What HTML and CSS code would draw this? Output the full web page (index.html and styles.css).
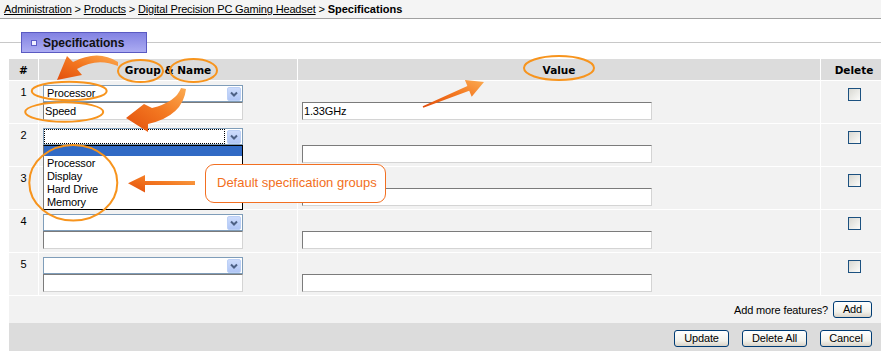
FILE: index.html
```html
<!DOCTYPE html>
<html lang="en">
<head>
  <meta charset="UTF-8" />
  <title>Specifications</title>
  <link rel="stylesheet" href="styles.css">
</head>
<body>
  <div class="crumbs">
    <a href="#">Administration</a> &gt; <a href="#">Products</a> &gt; <a href="#">Digital Precision PC Gaming Headset</a> &gt; <b>Specifications</b>
  </div>

  <div class="tabbar">
    <div class="tab"><span class="tab-icon"></span>Specifications</div>
  </div>

  <table class="specs">
    <thead>
      <tr>
        <th class="col-num">#</th>
        <th class="col-name">Group &amp; Name</th>
        <th class="col-value">Value</th>
        <th class="col-del">Delete</th>
      </tr>
    </thead>
    <tbody>
      <tr>
        <td class="num">1</td>
        <td class="name">
          <div class="select">
            <span class="select-text">Processor</span>
            <span class="select-btn"><svg width="14" height="14" viewBox="0 0 14 14"><path d="M4 5.5 L7 8.5 L10 5.5" /></svg></span>
          </div>
          <input class="field" type="text" value="Speed">
        </td>
        <td class="value"><input class="field wide" type="text" value="1.33GHz"></td>
        <td class="del"><input class="check" type="checkbox"></td>
      </tr>
      <tr>
        <td class="num">2</td>
        <td class="name">
          <div class="combo">
            <div class="select">
              <span class="select-text focus"></span>
              <span class="select-btn"><svg width="14" height="14" viewBox="0 0 14 14"><path d="M4 5.5 L7 8.5 L10 5.5" /></svg></span>
            </div>
            <!-- open dropdown -->
            <div class="options">
              <div class="option picked"></div>
              <div class="option-list">
                <div class="option">Processor</div>
                <div class="option">Display</div>
                <div class="option">Hard Drive</div>
                <div class="option">Memory</div>
              </div>
            </div>
          </div>
          <input class="field" type="text">
        </td>
        <td class="value"><input class="field wide" type="text"></td>
        <td class="del"><input class="check" type="checkbox"></td>
      </tr>
      <tr>
        <td class="num">3</td>
        <td class="name">
          <div class="select">
            <span class="select-text"></span>
            <span class="select-btn"><svg width="14" height="14" viewBox="0 0 14 14"><path d="M4 5.5 L7 8.5 L10 5.5" /></svg></span>
          </div>
          <input class="field" type="text">
        </td>
        <td class="value"><input class="field wide" type="text"></td>
        <td class="del"><input class="check" type="checkbox"></td>
      </tr>
      <tr>
        <td class="num">4</td>
        <td class="name">
          <div class="select">
            <span class="select-text"></span>
            <span class="select-btn"><svg width="14" height="14" viewBox="0 0 14 14"><path d="M4 5.5 L7 8.5 L10 5.5" /></svg></span>
          </div>
          <input class="field" type="text">
        </td>
        <td class="value"><input class="field wide" type="text"></td>
        <td class="del"><input class="check" type="checkbox"></td>
      </tr>
      <tr>
        <td class="num">5</td>
        <td class="name">
          <div class="select">
            <span class="select-text"></span>
            <span class="select-btn"><svg width="14" height="14" viewBox="0 0 14 14"><path d="M4 5.5 L7 8.5 L10 5.5" /></svg></span>
          </div>
          <input class="field" type="text">
        </td>
        <td class="value"><input class="field wide" type="text"></td>
        <td class="del"><input class="check" type="checkbox"></td>
      </tr>
    </tbody>
  </table>

  <div class="more">
    <span>Add more features?</span>
    <button class="btn btn-add">Add</button>
  </div>

  <div class="actions">
    <button class="btn btn-update">Update</button>
    <button class="btn btn-delete">Delete All</button>
    <button class="btn btn-cancel">Cancel</button>
  </div>

  <!-- annotations drawn over the form -->
  <div class="callout">Default specification groups</div>

  <svg class="marks" width="881" height="351" viewBox="0 0 881 351">
    <defs>
      <linearGradient id="flame" x1="0" y1="1" x2="1" y2="0">
        <stop offset="0" stop-color="#e24e0c" />
        <stop offset="0.55" stop-color="#f47a22" />
        <stop offset="1" stop-color="#fbab52" />
      </linearGradient>
    </defs>
    <g fill="none" stroke="#f7941d" stroke-width="2">
      <ellipse cx="140.5" cy="71" rx="22.5" ry="11" />
      <ellipse cx="193.5" cy="70.5" rx="23.5" ry="11.5" />
      <ellipse cx="559" cy="68" rx="35" ry="12" />
      <ellipse cx="69.2" cy="91" rx="37.5" ry="9.3" />
      <ellipse cx="64.2" cy="112" rx="39" ry="9.7" />
      <ellipse cx="73.3" cy="182.8" rx="44" ry="37.8" />
    </g>
    <g fill="url(#flame)">
      <path d="M118 62 Q98 49 73 62 L67 56 L57 80 L82 75 L77 69 Q97 57 118 66 Z" />
      <path d="M181 88 Q176 102 152 108 L144 104 L126 118 L148 132 L148 124 Q183 116 186 89 Z" />
      <path d="M422.7 106.3 L467.4 86.1 L464.9 80.1 L484 82 L471.7 96.7 L469.2 90.7 L423.3 107.7 Z" />
      <path d="M195 181 L145 181 L145 175 L128 183.3 L145 192.5 L145 185 L195 185 Z" />
    </g>
  </svg>
</body>
</html>
```

FILE: styles.css
```css
/* Page base: Tahoma-like small text */
html {
  overflow: hidden;
}

body {
  position: relative;
  width: 881px;
  height: 351px;
  margin: 0;
  overflow: hidden;
  background: #fff;
  color: #000;
  font-family: "Liberation Sans", Arial, sans-serif;
  font-size: 11px;
  letter-spacing: -0.15px;
}

/* Breadcrumb */
.crumbs {
  height: 18px;
  line-height: 18px;
  padding-left: 4px;
  background: #f4f4f4;
  border-bottom: 1px solid #a0a0a0;
  white-space: nowrap;
}

.crumbs a {
  color: #000;
  text-decoration: underline;
}

.crumbs b {
  letter-spacing: 0;
}

/* Section tab */
.tabbar {
  height: 39px;
  box-sizing: border-box;
  padding: 13px 0 0 21px;
  background: linear-gradient(to bottom, transparent 23px, #c8c8c8 23px, #c8c8c8 24px, transparent 24px);
}

.tab {
  display: flex;
  align-items: center;
  width: 126px;
  height: 21px;
  box-sizing: border-box;
  border: 1px solid #5a5ac2;
  background: linear-gradient(#8282e2, #acacf2);
  color: #111;
  font-size: 12px;
  font-weight: bold;
  letter-spacing: 0;
}

.tab-icon {
  width: 6px;
  height: 6px;
  box-sizing: border-box;
  margin: 0 6px 0 9px;
  border: 1px solid #5c5cc8;
  background: #f0f0ff;
}

/* Specifications grid */
.specs {
  width: 880px;
  margin-left: 8px;
  table-layout: fixed;
  border-collapse: separate;
  border-spacing: 1px;
}

.specs th {
  height: 21px;
  padding: 0;
  background: #dcdcdc;
  font-family: "DejaVu Sans", Verdana, sans-serif;
  font-size: 10.5px;
  font-weight: bold;
  letter-spacing: 0;
  text-align: center;
}

.col-num { width: 29px; }
.col-name { width: 258px; }
.col-value { width: 522px; }
.col-del { width: 66px; }

.specs tbody tr {
  height: 42px;
}

.specs td {
  padding: 0;
  background: #f2f2f2;
}

.specs td.num {
  vertical-align: top;
  padding-top: 5px;
  line-height: 13px;
  text-align: center;
}

.specs td.name {
  vertical-align: top;
  padding: 4px 0 0 4px;
}

.specs td.value {
  vertical-align: bottom;
  padding: 0 0 3px 4px;
}

.specs td.del {
  vertical-align: top;
  padding-top: 7px;
  text-align: center;
}

/* XP style combo box */
.combo {
  position: relative;
}

.select {
  display: flex;
  align-items: center;
  width: 200px;
  height: 17px;
  box-sizing: border-box;
  border: 1px solid #7f9db9;
  background: #fff;
}

.select-text {
  flex: 1;
  padding-left: 3px;
  line-height: 15px;
  white-space: nowrap;
}

.select-text.focus {
  align-self: stretch;
  margin-right: 2px;
  padding-left: 0;
  border: 1px dotted #000;
}

.select-btn {
  width: 14px;
  height: 14px;
  margin-right: 1px;
  box-sizing: border-box;
  border: 1px solid #bcd0f6;
  border-radius: 2px;
  background: linear-gradient(#cddcfc, #b0c6f6);
}

.select-btn svg {
  display: block;
  margin: -1px;
}

.select-btn path {
  fill: none;
  stroke: #4d6185;
  stroke-width: 2;
}

.options {
  position: absolute;
  top: 100%;
  left: 0;
  z-index: 5;
  width: 200px;
  box-sizing: border-box;
  border: 1px solid #000;
  border-left-color: #777;
  background: #fff;
}

.option.picked {
  height: 10px;
  background: #316ac5;
}

.option-list {
  padding-top: 1px;
}

.option-list .option {
  padding-left: 3px;
  line-height: 13px;
}

/* Inputs */
.field {
  display: block;
  width: 200px;
  height: 18px;
  box-sizing: border-box;
  margin: 0;
  padding: 0 1px;
  border: 1px solid;
  border-color: #7b7b7b #d4d4d4 #d4d4d4 #7b7b7b;
  background: #fff;
  color: #000;
  font-family: "Liberation Sans", Arial, sans-serif;
  font-size: 11px;
  letter-spacing: -0.15px;
  outline: none;
}

.field.wide {
  width: 350px;
}

.check {
  -webkit-appearance: none;
  appearance: none;
  display: inline-block;
  width: 13px;
  height: 13px;
  margin: 0;
  vertical-align: top;
  border: 1px solid #1c5180;
  background: linear-gradient(135deg, #d8d8d2, #fcfcfa);
}

/* Bottom bars */
.more {
  display: flex;
  justify-content: flex-end;
  align-items: center;
  gap: 5px;
  width: 877px;
  height: 27px;
  box-sizing: border-box;
  margin-left: 9px;
  padding-right: 14px;
  background: #f2f2f2;
}

.actions {
  display: flex;
  justify-content: flex-end;
  gap: 13px;
  width: 877px;
  box-sizing: border-box;
  margin-left: 9px;
  padding: 7px 14px 10px 0;
  background: #dcdcdc;
}

.btn {
  height: 17px;
  padding: 0;
  border: 1px solid #003c74;
  border-radius: 3px;
  background: linear-gradient(#ffffff, #f2f2ec 65%, #d9d3c8);
  color: #000;
  font-family: "Liberation Sans", Arial, sans-serif;
  font-size: 11px;
  letter-spacing: -0.15px;
  line-height: 15px;
}

.btn-add { width: 39px; }
.btn-update { width: 55px; }
.btn-delete { width: 65px; }
.btn-cancel { width: 52px; }

/* Annotations */
.callout {
  position: absolute;
  left: 205px;
  top: 164px;
  z-index: 8;
  width: 181px;
  height: 39px;
  box-sizing: border-box;
  padding-left: 11px;
  border: 1px solid #f26f21;
  border-radius: 9px;
  background: #fff;
  color: #f26f21;
  font-size: 13px;
  letter-spacing: 0;
  line-height: 35px;
}

.marks {
  position: absolute;
  top: 0;
  left: 0;
  z-index: 10;
  pointer-events: none;
}
```
